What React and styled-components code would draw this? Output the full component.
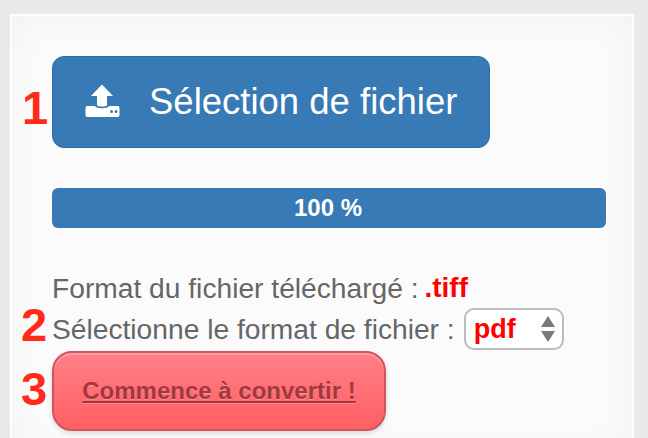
import React from "react";
import styled, { createGlobalStyle } from "styled-components";

const Global = createGlobalStyle`
  html, body { margin: 0; padding: 0; background: #e8e9eb; overflow: hidden; }
  body { font-family: "Liberation Sans", Arial, sans-serif; }
`;

const Page = styled.div`
  width: 648px;
  height: 438px;
  padding: 14px 14px 0 10px;
  box-sizing: border-box;
  overflow: hidden;
`;

const Panel = styled.section`
  position: relative;
  height: 440px;
  box-sizing: border-box;
  background: #fbfbfb;
  border: 2px solid #fff;
  box-shadow: inset 0 0 40px rgba(0, 0, 0, 0.04);
  padding: 40px 26px 0 40px;
  display: flex;
  flex-direction: column;
`;

const Step = styled.span`
  position: absolute;
  left: ${(p) => p.$left}px;
  top: ${(p) => p.$top}px;
  font-size: 47px;
  line-height: 46px;
  font-weight: 700;
  color: #ff2a1a;
`;

const UploadButton = styled.button`
  width: 438px;
  height: 92px;
  box-sizing: border-box;
  background: #377ab5;
  border: 1px solid #2e6da4;
  border-radius: 12px;
  color: #fff;
  font-family: inherit;
  font-size: 36.5px;
  display: flex;
  align-items: center;
  padding: 0 0 0 32px;
  gap: 28px;
`;

const Progress = styled.div`
  margin-top: 40px;
  height: 40px;
  background: #377ab5;
  border-radius: 6px;
  color: #fff;
  font-size: 24px;
  font-weight: 700;
  line-height: 39px;
  text-align: center;
  padding-right: 2px;
`;

const Line = styled.div`
  color: #666;
  font-size: 28.2px;
  line-height: 40px;
  display: flex;
  align-items: center;
  white-space: pre;
`;

const FirstLine = styled(Line)`
  margin-top: 40px;
`;

const Red = styled.b`
  color: #f00;
  font-size: 28px;
  margin-left: -2px;
`;

const SelectWrap = styled.div`
  position: relative;
  margin-left: 9px;
  width: 100px;
  height: 42px;
`;

const Select = styled.select`
  appearance: none;
  width: 100%;
  height: 100%;
  box-sizing: border-box;
  background: #fff;
  border: 2px solid #bbb;
  border-radius: 10px;
  color: #f00;
  font-family: inherit;
  font-size: 27px;
  font-weight: 700;
  padding: 0 0 0 8px;
  outline: none;
`;

const Arrows = styled.svg`
  position: absolute;
  right: 9px;
  top: 8px;
  pointer-events: none;
`;

const ConvertButton = styled.button`
  width: 334px;
  height: 80px;
  margin-top: 1px;
  box-sizing: border-box;
  border: 2px solid #cf555d;
  border-radius: 20px;
  background: linear-gradient(#ff7f85, #ff5f64);
  box-shadow: inset 0 2px 0 rgba(255, 255, 255, 0.25), 0 2px 5px rgba(0, 0, 0, 0.15);
  color: #a0383e;
  font-family: inherit;
  font-size: 24px;
  font-weight: 700;
  text-decoration: underline;
  text-shadow: 0 1px 0 rgba(255, 255, 255, 0.25);
  padding: 0;
`;

const UploadIcon = () => (
  <svg width="36" height="36" viewBox="0 0 36 36" fill="#fff">
    <path d="M17 0.5 L28 12 L22 12 L22 21 C22 23 12 23 12 21 L12 12 L6 12 Z" />
    <path fillRule="evenodd" d="M2 22 L10 22 C11 25 23 25 24 22 L33 22 Q34.5 22 34.5 24 L34.5 31 Q34.5 33 33 33 L2 33 Q0.5 33 0.5 31 L0.5 24 Q0.5 22 2 22 Z M25 27.5 a1.5 1.5 0 1 0 3 0 a1.5 1.5 0 1 0 -3 0 Z M29.5 27.5 a1.5 1.5 0 1 0 3 0 a1.5 1.5 0 1 0 -3 0 Z" />
  </svg>
);

export default function App() {
  return (
    <Page>
      <Global />
      <Panel>
        <Step $left={10} $top={69}>1</Step>
        <Step $left={9} $top={286}>2</Step>
        <Step $left={9} $top={350}>3</Step>
        <UploadButton>
          <UploadIcon />
          Sélection de fichier
        </UploadButton>
        <Progress>100 %</Progress>
        <FirstLine>
          Format du fichier téléchargé : <Red>.tiff</Red>
        </FirstLine>
        <Line>
          Sélectionne le format de fichier :
          <SelectWrap>
            <Select defaultValue="pdf">
              <option value="pdf">pdf</option>
            </Select>
            <Arrows width="14" height="26" viewBox="0 0 14 26" fill="#7a7a7a">
              <path d="M7 0 L14 11 L0 11 Z M7 26 L14 15 L0 15 Z" />
            </Arrows>
          </SelectWrap>
        </Line>
        <ConvertButton>Commence à convertir !</ConvertButton>
      </Panel>
    </Page>
  );
}
